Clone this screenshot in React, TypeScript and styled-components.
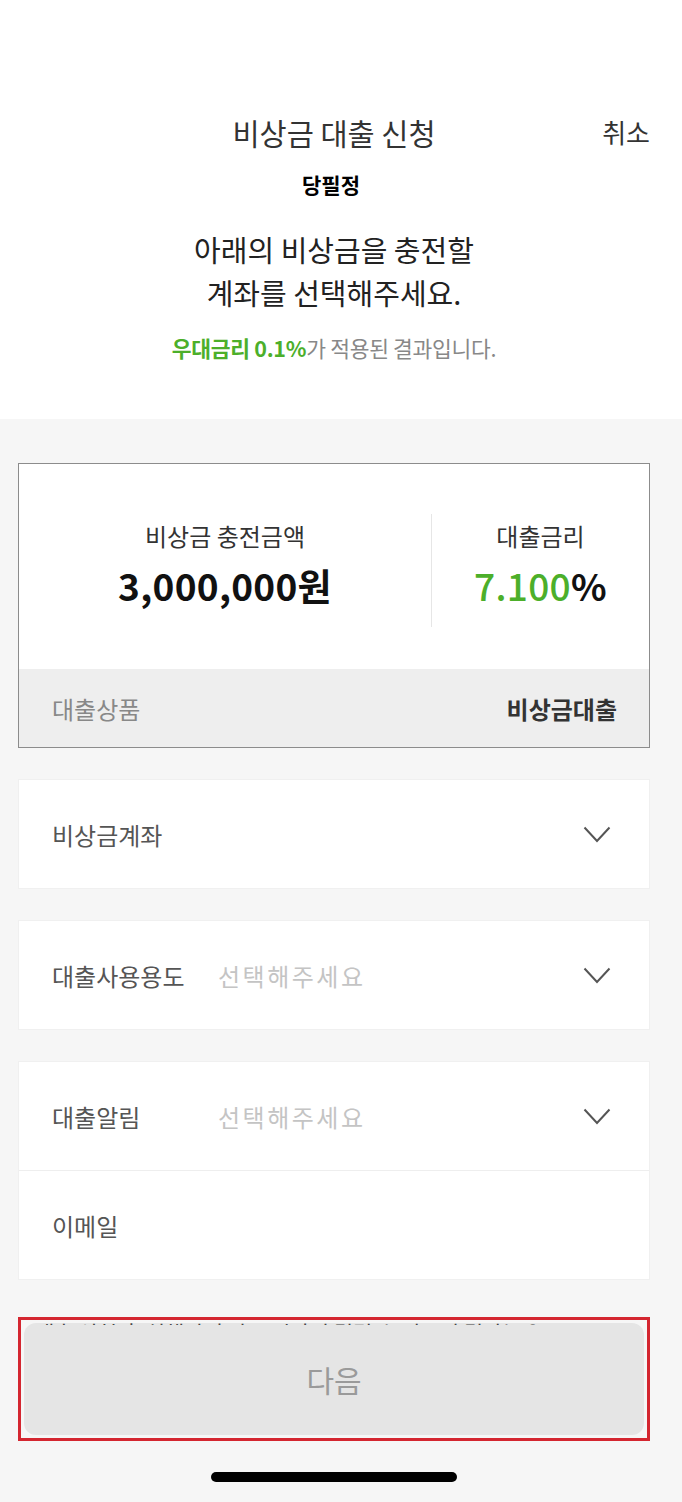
import React from "react";
import styled, { createGlobalStyle } from "styled-components";

const GlobalStyle = createGlobalStyle`
  html, body {
    margin: 0;
    padding: 0;
    background: #f6f6f6;
  }
  body {
    font-family: "Noto Sans CJK KR", "Noto Sans", sans-serif;
    color: #333;
  }
`;

const GREEN = "#4caf2a";

const Page = styled.div`
  width: 682px;
  min-height: 1502px;
  background: #f6f6f6;
  display: flex;
  flex-direction: column;
`;

const Top = styled.section`
  background: #fff;
  padding: 112px 32px 56px 18px;
  display: flex;
  flex-direction: column;
  align-items: center;
`;

const Header = styled.header`
  width: 100%;
  display: grid;
  grid-template-columns: 1fr auto 1fr;
  align-items: center;
  height: 40px;
`;

const Title = styled.h1`
  grid-column: 2;
  margin: 0;
  font-size: 29.5px;
  font-weight: 400;
  line-height: 40px;
  color: #333;
`;

const Cancel = styled.button`
  grid-column: 3;
  justify-self: end;
  border: 0;
  background: none;
  padding: 0;
  font-family: inherit;
  font-size: 26px;
  line-height: 40px;
  color: #333;
`;

const Name = styled.div`
  margin-top: 18px;
  font-size: 21px;
  font-weight: 700;
  line-height: 28px;
  color: #000;
  padding-right: 6px;
`;

const Headline = styled.p`
  margin: 30px 0 0;
  font-size: 29px;
  line-height: 43px;
  text-align: center;
  color: #222;
`;

const Note = styled.p`
  margin: 19px 0 0;
  font-size: 21.5px;
  line-height: 30px;
  color: #888;
  letter-spacing: -0.3px;
`;

const Green = styled.span<{ $weight?: number }>`
  color: ${GREEN};
  font-weight: ${(p) => p.$weight ?? "inherit"};
`;

const Body = styled.section`
  padding: 44px 32px 0 18px;
  display: flex;
  flex-direction: column;
`;

const Card = styled.div`
  border: 1px solid #8c8c8c;
  background: #fff;
`;

const Stats = styled.div`
  display: grid;
  grid-template-columns: 412px 1fr;
  padding: 50px 0 42px;
`;

const Stat = styled.div<{ $divided?: boolean }>`
  height: 113px;
  padding-top: 6px;
  box-sizing: border-box;
  display: flex;
  flex-direction: column;
  align-items: center;
  border-left: ${(p) => (p.$divided ? "1px solid #e6e6e6" : "0")};
`;

const StatLabel = styled.div`
  font-size: 24px;
  line-height: 32px;
  color: #333;
`;

const StatValue = styled.div`
  margin-top: 9px;
  font-size: 37px;
  font-weight: 700;
  line-height: 48px;
  letter-spacing: 0.3px;
  color: #111;
`;

const ProductRow = styled.div`
  height: 78px;
  background: #eeeeee;
  display: flex;
  align-items: center;
  justify-content: space-between;
  padding: 0 32px 0 33px;
  font-size: 24px;
`;

const Muted = styled.span`
  color: #888;
`;

const Strong = styled.span`
  font-weight: 700;
  color: #333;
`;

const Box = styled.div`
  margin-top: 31px;
  background: #fff;
  border: 1px solid #f0f0f0;
  display: flex;
  flex-direction: column;
`;

const Field = styled.div`
  height: 108px;
  display: flex;
  align-items: center;
  padding: 0 38px 0 33px;
  font-size: 24px;
  & + & {
    border-top: 1px solid #eeeeee;
  }
`;

const FieldLabel = styled.span`
  width: 166px;
  color: #555;
`;

const Placeholder = styled.span`
  flex: 1;
  color: #c4c4c4;
  letter-spacing: 2.5px;
`;

const Frame = styled.div`
  position: relative;
  margin-top: 37px;
  border: 3px solid #d42630;
  padding: 3px;
`;

const Peek = styled.div`
  position: absolute;
  top: 0;
  left: 14px;
  right: 110px;
  height: 5px;
  overflow: hidden;
  z-index: 1;
  font-size: 21px;
  line-height: 24px;
  color: #444;
  white-space: nowrap;
`;

const NextButton = styled.button`
  width: 100%;
  height: 112px;
  border: 0;
  border-radius: 12px;
  background: #e5e5e5;
  font-family: inherit;
  font-size: 30px;
  color: #9a9a9a;
  display: block;
`;

const HomeBar = styled.div`
  align-self: center;
  margin-top: 31px;
  width: 246px;
  height: 10px;
  border-radius: 5px;
  background: #000;
`;

const Chevron = () => (
  <svg width="28" height="17" viewBox="0 0 28 17" fill="none">
    <polyline points="1.5,1.5 14,15 26.5,1.5" stroke="#555" strokeWidth="2" />
  </svg>
);

const App: React.FC = () => {
  return (
    <Page>
      <GlobalStyle />
      <Top>
        <Header>
          <Title>비상금 대출 신청</Title>
          <Cancel>취소</Cancel>
        </Header>
        <Name>당필정</Name>
        <Headline>
          아래의 비상금을 충전할
          <br />
          계좌를 선택해주세요.
        </Headline>
        <Note>
          <Green $weight={700}>우대금리 0.1%</Green>가 적용된 결과입니다.
        </Note>
      </Top>

      <Body>
        <Card>
          <Stats>
            <Stat>
              <StatLabel>비상금 충전금액</StatLabel>
              <StatValue>3,000,000원</StatValue>
            </Stat>
            <Stat $divided>
              <StatLabel>대출금리</StatLabel>
              <StatValue>
                <Green $weight={500}>7.100</Green>%
              </StatValue>
            </Stat>
          </Stats>
          <ProductRow>
            <Muted>대출상품</Muted>
            <Strong>비상금대출</Strong>
          </ProductRow>
        </Card>

        <Box>
          <Field>
            <FieldLabel>비상금계좌</FieldLabel>
            <Placeholder />
            <Chevron />
          </Field>
        </Box>

        <Box>
          <Field>
            <FieldLabel>대출사용용도</FieldLabel>
            <Placeholder>선택해주세요</Placeholder>
            <Chevron />
          </Field>
        </Box>

        <Box>
          <Field>
            <FieldLabel>대출알림</FieldLabel>
            <Placeholder>선택해주세요</Placeholder>
            <Chevron />
          </Field>
          <Field>
            <FieldLabel>이메일</FieldLabel>
          </Field>
        </Box>

        <Frame>
          <Peek>대출 신청 후 실행까지 다소 시간이 걸릴 수 있으며 결과는 알림으로 안내</Peek>
          <NextButton>다음</NextButton>
        </Frame>

        <HomeBar />
      </Body>
    </Page>
  );
};

export default App;
